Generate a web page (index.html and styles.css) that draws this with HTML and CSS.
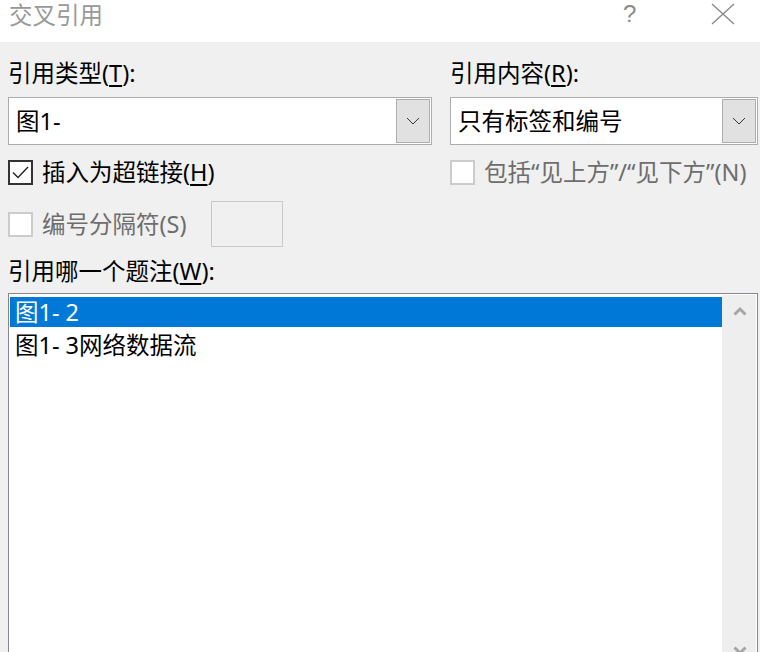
FILE: index.html
```html
<!DOCTYPE html>
<html lang="zh-CN">
<head>
<meta charset="utf-8">
<title>交叉引用</title>
<link rel="stylesheet" href="styles.css">
</head>
<body>
<div class="dialog">
  <div class="titlebar">
    <span class="title">交叉引用</span>
    <span class="help">?</span>
    <span class="close">
      <svg width="24" height="22" viewBox="0 0 24 22"><path d="M1 1 L23 21 M23 1 L1 21" stroke="#8a8a8a" stroke-width="1.4" fill="none"/></svg>
    </span>
  </div>
  <div class="body">
    <div class="grid">
      <div class="label">引用类型(<u>T</u>):</div>
      <div class="label">引用内容(<u>R</u>):</div>

      <div class="combo">
        <span class="combo-text">图1-</span>
        <span class="combo-btn"><svg width="14" height="8" viewBox="0 0 14 8"><path d="M1 1 L7 7 L13 1" stroke="#333" stroke-width="1" fill="none"/></svg></span>
      </div>
      <div class="combo">
        <span class="combo-text">只有标签和编号</span>
        <span class="combo-btn"><svg width="14" height="8" viewBox="0 0 14 8"><path d="M1 1 L7 7 L13 1" stroke="#333" stroke-width="1" fill="none"/></svg></span>
      </div>

      <div class="check-row">
        <span class="box checked"><svg width="21" height="21" viewBox="0 0 21 21"><path d="M3 10.5 L8 15.5 L18 5" stroke="#222" stroke-width="1.4" fill="none"/></svg></span>
        <span class="check-text">插入为超链接(<u>H</u>)</span>
      </div>
      <div class="check-row">
        <span class="box disabled"></span>
        <span class="check-text dim">包括“见上方”/“见下方”(N)</span>
      </div>

      <div class="check-row sep-row">
        <span class="box disabled"></span>
        <span class="check-text dim">编号分隔符(S)</span>
        <span class="sep-input"></span>
      </div>
      <div></div>
    </div>

    <div class="label list-label">引用哪一个题注(<u>W</u>):</div>
    <div class="listbox">
      <div class="items">
        <div class="item selected">图1- 2</div>
        <div class="item">图1- 3网络数据流</div>
      </div>
      <div class="scrollbar">
        <svg class="arrow up" width="14" height="10" viewBox="0 0 14 10"><path d="M1.5 8.5 L7 3 L12.5 8.5" stroke="#a6a6a6" stroke-width="3" fill="none"/></svg>
        <svg class="arrow down" width="14" height="10" viewBox="0 0 14 10"><path d="M1.5 1.5 L7 7 L12.5 1.5" stroke="#a6a6a6" stroke-width="3" fill="none"/></svg>
      </div>
    </div>
  </div>
</div>
</body>
</html>
```

FILE: styles.css
```css
html, body {
  margin: 0;
  padding: 0;
  background: #f0f0f0;
  width: 760px;
  height: 652px;
  overflow: hidden;
}

.dialog {
  font-family: "Noto Sans", "Noto Sans CJK SC", sans-serif;
  font-size: 23.5px;
  color: #000;
}

.titlebar {
  height: 42px;
  background: #fff;
  display: flex;
  align-items: flex-start;
}

.title {
  color: #999;
  font-size: 23.5px;
  line-height: 30px;
  padding-left: 9px;
  flex: 1;
}

.help {
  color: #8a8a8a;
  font-family: "Liberation Sans", sans-serif;
  font-size: 24px;
  line-height: 28px;
  width: 12px;
  margin-right: 76px;
}

.close {
  display: flex;
  padding-top: 3px;
  margin-right: 25px;
}

.body {
  padding: 16px 0 0 8px;
}

.grid {
  display: grid;
  grid-template-columns: 424px 308px;
  column-gap: 18px;
  align-items: center;
}

.label {
  line-height: 30px;
  height: 30px;
  white-space: nowrap;
}

.label u {
  text-underline-offset: 3px;
}

.combo {
  margin-top: 9px;
  height: 48px;
  box-sizing: border-box;
  border: 1px solid #adadad;
  background: #fff;
  display: flex;
  align-items: center;
  padding: 1px;
}

.combo-text {
  flex: 1;
  padding-left: 6px;
  line-height: 44px;
  white-space: nowrap;
}

.combo-btn {
  width: 34px;
  height: 44px;
  box-sizing: border-box;
  background: #e1e1e1;
  border: 1px solid #adadad;
  display: flex;
  align-items: center;
  justify-content: center;
}

.check-row {
  display: flex;
  align-items: center;
  height: 30px;
  margin-top: 12px;
  white-space: nowrap;
}

.box {
  width: 25px;
  height: 25px;
  box-sizing: border-box;
  border: 2px solid #333;
  background: #fff;
  display: flex;
  align-items: center;
  justify-content: center;
  flex: none;
}

.box.disabled {
  border-color: #cccccc;
}

.check-text {
  margin-left: 9px;
  line-height: 30px;
}

.check-text u {
  text-underline-offset: 3px;
}

.dim {
  color: #6d6d6d;
}

.sep-row {
  margin-top: 22px;
}

.sep-input {
  width: 72px;
  height: 46px;
  box-sizing: border-box;
  border: 1px solid #c8c8c8;
  margin-left: 24px;
  flex: none;
}

.list-label {
  margin-top: 17px;
}

.listbox {
  margin-top: 7px;
  width: 750px;
  height: 359px;
  box-sizing: border-box;
  border: 1px solid #828790;
  border-bottom: none;
  background: #fff;
  display: flex;
  padding: 3px 0 0 1px;
}

.items {
  flex: 1;
}

.item {
  height: 30px;
  line-height: 30px;
  padding-left: 5px;
  margin-bottom: 3px;
  white-space: nowrap;
}

.item.selected {
  background: #0078d7;
  color: #fff;
}

.scrollbar {
  width: 34px;
  background: #eeeeee;
  margin-top: -2px;
  margin-right: 1px;
  position: relative;
  overflow: hidden;
}

.arrow {
  position: absolute;
  left: 11px;
}

.arrow.up {
  top: 11px;
}

.arrow.down {
  top: 351px;
}
```
